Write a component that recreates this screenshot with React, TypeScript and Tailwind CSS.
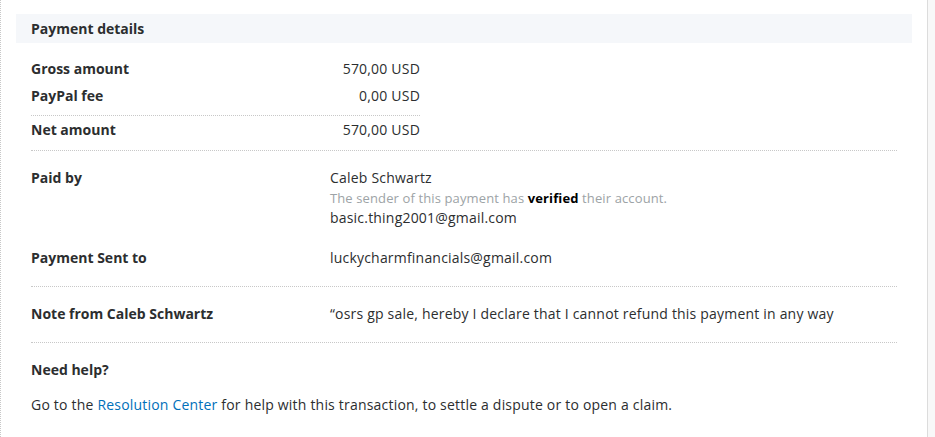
const Row = ({ label, children, className = "" }: { label: string; children: React.ReactNode; className?: string }) => {
    return (
        <div className={`flex ${className}`}>
            <div className="w-[299px] shrink-0 font-bold">{label}</div>
            <div className="flex-1 tracking-[0.2px]">{children}</div>
        </div>
    )
}

const App = () => {
    return (
        <div className="w-[935px] h-[437px] flex bg-white text-[14px] leading-[20px] text-[#2c2e2f] font-['Open_Sans','Liberation_Sans',sans-serif] overflow-hidden">
            <div className="flex-1 border-l border-dotted border-[#c8c8c8] px-[15px] pt-[14px]">
                <div className="h-[29px] bg-[#f5f7fa] px-[15px] flex items-center font-bold">Payment details</div>
                <div className="px-[15px]">
                    <div className="w-[389px] pt-[12px]">
                        <div className="h-[27px] flex items-center">
                            <div className="w-[299px] font-bold">Gross amount</div>
                            <div className="flex-1 text-right tracking-[0.2px]">570,00 USD</div>
                        </div>
                        <div className="h-[27px] flex items-center">
                            <div className="w-[299px] font-bold">PayPal fee</div>
                            <div className="flex-1 text-right tracking-[0.2px]">0,00 USD</div>
                        </div>
                        <div className="mt-[6px] h-[29px] border-t border-dotted border-[#c8c8c8] flex items-center">
                            <div className="w-[299px] font-bold">Net amount</div>
                            <div className="flex-1 text-right tracking-[0.2px]">570,00 USD</div>
                        </div>
                    </div>
                    <div className="mt-[6px] border-t border-dotted border-[#c8c8c8] pt-[17px] pb-[18px]">
                        <Row label="Paid by">
                            <div>Caleb Schwartz</div>
                            <div className="text-[13px] tracking-[0.12px] text-[#9da3a6]">
                                The sender of this payment has <span className="font-bold text-black">verified</span> their account.
                            </div>
                            <div>basic.thing2001@gmail.com</div>
                        </Row>
                        <Row label="Payment Sent to" className="mt-[20px]">
                            luckycharmfinancials@gmail.com
                        </Row>
                    </div>
                    <div className="border-t border-dotted border-[#c8c8c8] pt-[17px] pb-[18px]">
                        <Row label="Note from Caleb Schwartz">
                            “osrs gp sale, hereby I declare that I cannot refund this payment in any way
                        </Row>
                    </div>
                    <div className="border-t border-dotted border-[#c8c8c8] pt-[17px]">
                        <div className="font-bold">Need help?</div>
                        <p className="mt-[15px] tracking-[0.2px]">
                            Go to the <span className="text-[#0070ba]">Resolution Center</span> for help with this transaction, to settle a dispute or to open a claim.
                        </p>
                    </div>
                </div>
            </div>
            <div className="w-[8px] shrink-0 border-l border-[#dcdcdc] bg-[#f8f8f8]"></div>
        </div>
    )
}

export default App
